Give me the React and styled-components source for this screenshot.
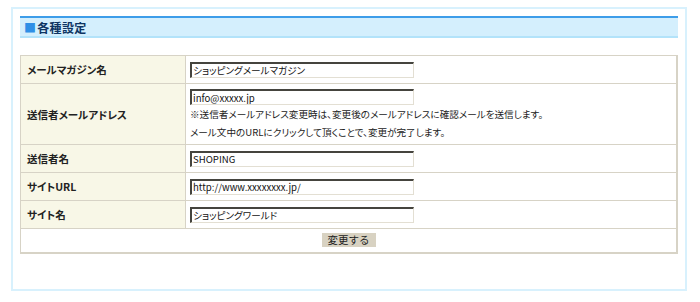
import React from "react";
import styled, { createGlobalStyle } from "styled-components";

const Global = createGlobalStyle`
  html, body { margin: 0; padding: 0; background: #fff; }
  body { font-family: "Noto Sans CJK JP", "Noto Sans", sans-serif; }
`;

const Outer = styled.div`
  box-sizing: border-box;
  margin: 7px 0 0 11px;
  width: 676px;
  height: 284px;
  border: 2px solid #d8f1fd;
  padding: 7px 7px 0 7px;
`;

const Header = styled.div`
  box-sizing: border-box;
  height: 22px;
  background: #d4effd;
  border-top: 2px solid #3d9de9;
  border-bottom: 2px solid #b3e3fa;
  display: flex;
  align-items: center;
  padding-left: 4px;
  font-size: 12px;
  font-weight: bold;
  color: #0e3563;
  font-feature-settings: "palt";
  letter-spacing: 0.3px;
`;

const Square = styled.span`
  color: #2f8fe6;
  margin-right: 1px;
`;

const Table = styled.table`
  margin-top: 17px;
  width: 658px;
  border-collapse: collapse;
  border: 1px solid #d7d3c6;
  border-right-width: 2px;
  border-bottom-width: 2px;
`;

const Row = styled.tr`
  height: ${(p) => p.$h}px;
`;

const Label = styled.th`
  box-sizing: border-box;
  width: 165px;
  background: #f8f7e7;
  border: 1px solid #d7d3c6;
  text-align: left;
  padding: 0 0 0 6px;
  font-size: 10.5px;
  font-weight: bold;
  color: #222;
  font-feature-settings: "palt";
`;

const Cell = styled.td`
  border: 1px solid #d7d3c6;
  padding: ${(p) => (p.$tall ? "5px 4px 3px 4px" : "0 4px")};
  vertical-align: middle;
  text-align: ${(p) => (p.$center ? "center" : "left")};
  font-size: 9.6px;
  color: #222;
  font-feature-settings: "palt";
`;

const Input = styled.input`
  box-sizing: border-box;
  display: block;
  width: 224px;
  height: 16px;
  margin: 0;
  padding: 0 1px;
  border-style: solid;
  border-width: 2px 1px 1px 2px;
  border-color: #45443e #e3dfd3 #e3dfd3 #45443e;
  font-family: "Noto Sans CJK JP", "Noto Sans", sans-serif;
  font-size: 9.6px;
  line-height: 12px;
  color: #111;
  background: #fff;
  font-feature-settings: "palt";
  outline: none;
`;

const Note = styled.div`
  line-height: 18px;
  white-space: nowrap;
`;

const Button = styled.button`
  box-sizing: border-box;
  height: 14px;
  width: 54px;
  margin: 0 auto;
  padding: 0;
  border: none;
  background: #d8d2c2;
  font-family: "Noto Sans CJK JP", "Noto Sans", sans-serif;
  font-size: 10.5px;
  line-height: 14px;
  color: #222;
  display: block;
`;

const rows = [
  { label: "メールマガジン名", value: "ショッピングメールマガジン" },
  {
    label: "送信者メールアドレス",
    value: "info@xxxxx.jp",
    notes: [
      "※送信者メールアドレス変更時は、変更後のメールアドレスに確認メールを送信します。",
      "メール文中のURLにクリックして頂くことで、変更が完了します。",
    ],
  },
  { label: "送信者名", value: "SHOPING" },
  { label: "サイトURL", value: "http://www.xxxxxxxx.jp/" },
  { label: "サイト名", value: "ショッピングワールド" },
];

export default function App() {
  return (
    <>
      <Global />
      <Outer>
        <Header>
          <Square>■</Square>各種設定
        </Header>
        <Table>
          <tbody>
            {rows.map((r) => (
              <Row key={r.label} $h={r.notes ? 60 : 28}>
                <Label>{r.label}</Label>
                <Cell $tall={!!r.notes}>
                  <Input defaultValue={r.value} />
                  {r.notes && r.notes.map((n) => <Note key={n}>{n}</Note>)}
                </Cell>
              </Row>
            ))}
            <Row $h={24}>
              <Cell colSpan={2} $center>
                <Button type="button">変更する</Button>
              </Cell>
            </Row>
          </tbody>
        </Table>
      </Outer>
    </>
  );
}
